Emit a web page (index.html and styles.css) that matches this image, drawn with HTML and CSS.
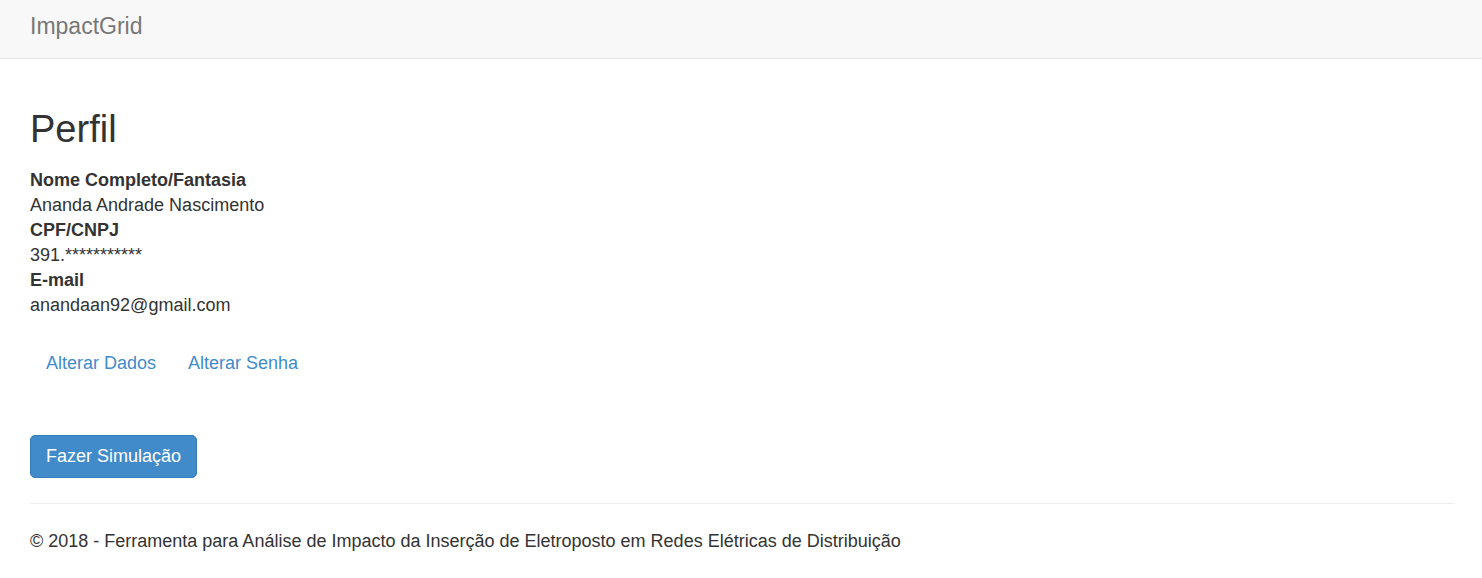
FILE: index.html
```html
<!DOCTYPE html>
<html lang="pt-BR">
<head>
<meta charset="utf-8">
<meta name="viewport" content="width=device-width, initial-scale=1">
<title>Perfil - ImpactGrid</title>
<link rel="stylesheet" href="styles.css">
</head>
<body>
<nav class="navbar"><a class="brand" href="#">ImpactGrid</a></nav>
<div class="container">
<main>
<h1 class="title">Perfil</h1>
<dl class="profile">
<dt>Nome Completo/Fantasia</dt>
<dd>Ananda Andrade Nascimento</dd>
<dt>CPF/CNPJ</dt>
<dd>391.***********</dd>
<dt>E-mail</dt>
<dd>anandaan92@gmail.com</dd>
</dl>
<div class="links">
<a class="btn" href="#">Alterar Dados</a>
<a class="btn" href="#">Alterar Senha</a>
</div>
<button class="btn btn-primary" type="button">Fazer Simulação</button>
</main>
<footer class="footer">
<p>© 2018 - Ferramenta para Análise de Impacto da Inserção de Eletroposto em Redes Elétricas de Distribuição</p>
</footer>
</div>
</body>
</html>
```

FILE: styles.css
```css
* {
  box-sizing: border-box;
}

body {
  margin: 0;
  background: #fff;
  color: #333;
  font: 18px/25px "Liberation Sans", Arial, sans-serif;
}

a {
  color: #428bca;
  text-decoration: none;
}

.navbar {
  display: flex;
  padding: 14px 30px 19px;
  background: #f8f8f8;
  border-bottom: 1px solid #e7e7e7;
}

.brand {
  color: #777;
  font-size: 23px;
  line-height: 25px;
}

.container {
  padding: 48px 27px 24px 30px;
}

.title {
  margin: 0 0 17px;
  font-size: 38px;
  font-weight: 500;
  line-height: 44px;
}

.profile {
  margin: 0 0 24px;
}

.profile dt {
  font-weight: 700;
}

.profile dd {
  margin: 0;
}

.links {
  display: flex;
  flex-wrap: wrap;
  margin-bottom: 50px;
}

.btn {
  display: inline-block;
  padding: 8px 15px;
  border: 1px solid transparent;
  border-radius: 5px;
  font: inherit;
  cursor: pointer;
}

.btn-primary {
  background: #428bca;
  border-color: #357ebd;
  color: #fff;
}

.footer {
  margin-top: 25px;
  padding-top: 25px;
  border-top: 1px solid #eee;
}

.footer p {
  margin: 0;
}
```
